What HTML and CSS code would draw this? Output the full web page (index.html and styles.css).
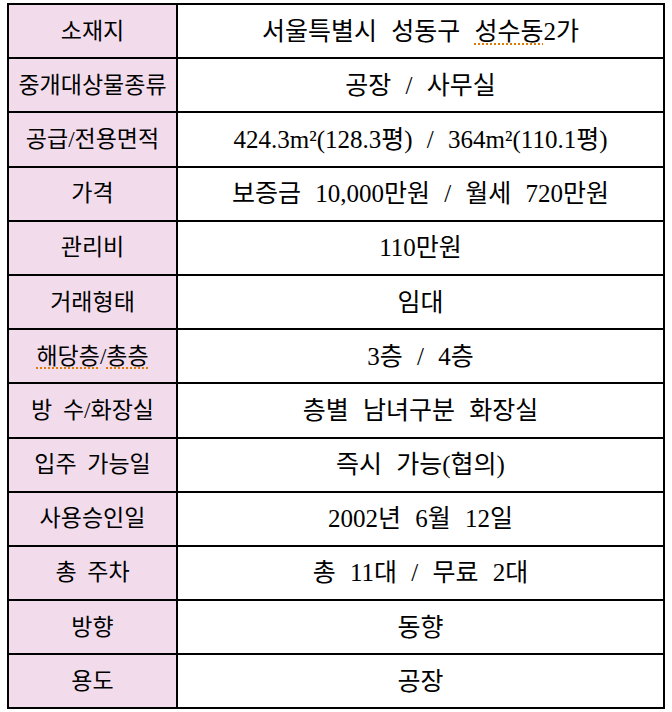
FILE: index.html
```html
<!DOCTYPE html>
<html lang="ko">
<head>
<meta charset="utf-8">
<title>매물 정보</title>
<link rel="stylesheet" href="styles.css">
</head>
<body>
<table class="info">
  <tr><th>소재지</th><td>서울특별시 성동구 <span class="spell">성수동</span>2가</td></tr>
  <tr><th>중개대상물종류</th><td>공장 / 사무실</td></tr>
  <tr><th>공급/전용면적</th><td>424.3m²(128.3평) / 364m²(110.1평)</td></tr>
  <tr><th>가격</th><td>보증금 10,000만원 / 월세 720만원</td></tr>
  <tr><th>관리비</th><td>110만원</td></tr>
  <tr><th>거래형태</th><td>임대</td></tr>
  <tr><th><span class="spell">해당층</span>/<span class="spell">총층</span></th><td>3층 / 4층</td></tr>
  <tr><th>방 수/화장실</th><td>층별 남녀구분 화장실</td></tr>
  <tr><th>입주 가능일</th><td>즉시 가능(협의)</td></tr>
  <tr><th>사용승인일</th><td>2002년 6월 12일</td></tr>
  <tr><th>총 주차</th><td>총 11대 / 무료 2대</td></tr>
  <tr><th>방향</th><td>동향</td></tr>
  <tr><th>용도</th><td>공장</td></tr>
</table>
</body>
</html>
```

FILE: styles.css
```css
html, body {
  margin: 0;
  padding: 0;
  background: #ffffff;
}
body {
  padding: 3px 0 0 7px;
  font-family: "Liberation Serif", "Noto Sans CJK KR", serif;
  color: #000;
}
.info {
  border-collapse: collapse;
  width: 658px;
  table-layout: fixed;
}
.info th, .info td {
  border: 2px solid #000;
  height: 52.2px;
  padding: 0;
  text-align: center;
  vertical-align: middle;
  font-size: 25px;
  font-weight: normal;
  word-spacing: 8px;
  line-height: 1;
  white-space: nowrap;
}
.info th {
  width: 167px;
  background: #f2dcec;
  font-size: 23px;
  word-spacing: 5px;
}
.spell {
  text-decoration: underline dotted #e07a00;
  text-decoration-thickness: 2px;
  text-underline-offset: 4px;
}
```
